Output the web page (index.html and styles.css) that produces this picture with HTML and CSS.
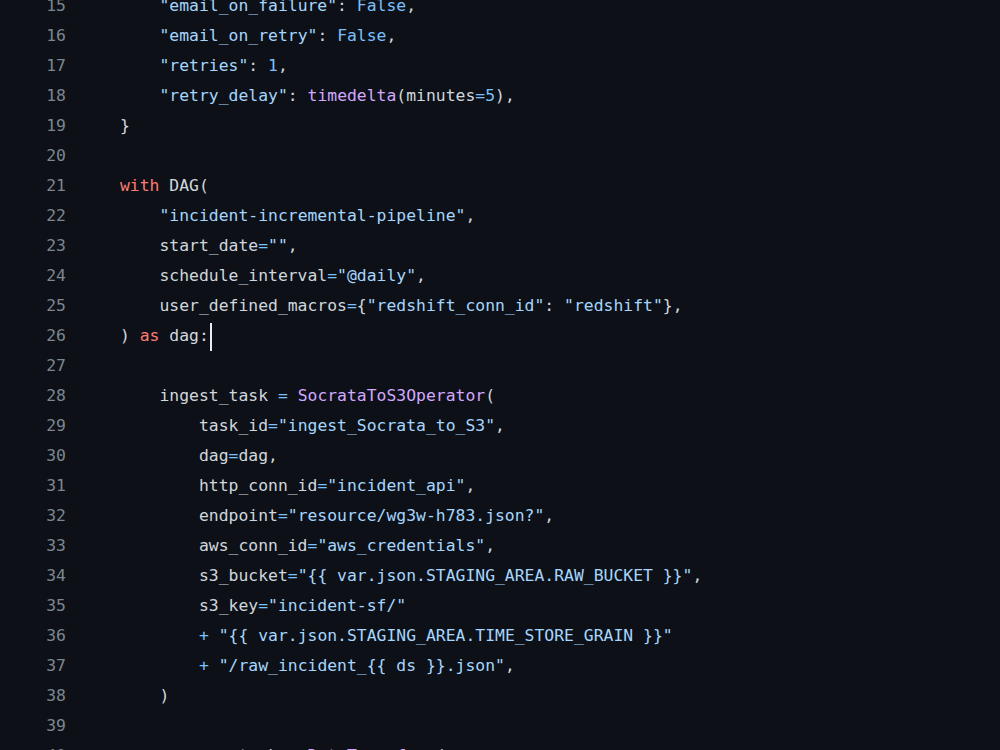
FILE: index.html
```html
<!DOCTYPE html>
<html>
<head>
<meta charset="utf-8">
<link rel="stylesheet" href="styles.css">
</head>
<body>
<div class="code-view">
<div class="line"><span class="ln">15</span><span class="code">    <span class="s">"email_on_failure"</span>: <span class="c">False</span>,</span></div>
<div class="line"><span class="ln">16</span><span class="code">    <span class="s">"email_on_retry"</span>: <span class="c">False</span>,</span></div>
<div class="line"><span class="ln">17</span><span class="code">    <span class="s">"retries"</span>: <span class="c">1</span>,</span></div>
<div class="line"><span class="ln">18</span><span class="code">    <span class="s">"retry_delay"</span>: <span class="f">timedelta</span>(minutes<span class="o">=</span><span class="c">5</span>),</span></div>
<div class="line"><span class="ln">19</span><span class="code">}</span></div>
<div class="line"><span class="ln">20</span><span class="code"></span></div>
<div class="line"><span class="ln">21</span><span class="code"><span class="k">with</span> DAG(</span></div>
<div class="line"><span class="ln">22</span><span class="code">    <span class="s">"incident-incremental-pipeline"</span>,</span></div>
<div class="line"><span class="ln">23</span><span class="code">    start_date<span class="o">=</span><span class="s">""</span>,</span></div>
<div class="line"><span class="ln">24</span><span class="code">    schedule_interval<span class="o">=</span><span class="s">"@daily"</span>,</span></div>
<div class="line"><span class="ln">25</span><span class="code">    user_defined_macros<span class="o">=</span>{<span class="s">"redshift_conn_id"</span>: <span class="s">"redshift"</span>},</span></div>
<div class="line"><span class="ln">26</span><span class="code">) <span class="k">as</span> dag:<span class="cursor"></span></span></div>
<div class="line"><span class="ln">27</span><span class="code"></span></div>
<div class="line"><span class="ln">28</span><span class="code">    ingest_task <span class="o">=</span> <span class="f">SocrataToS3Operator</span>(</span></div>
<div class="line"><span class="ln">29</span><span class="code">        task_id<span class="o">=</span><span class="s">"ingest_Socrata_to_S3"</span>,</span></div>
<div class="line"><span class="ln">30</span><span class="code">        dag<span class="o">=</span>dag,</span></div>
<div class="line"><span class="ln">31</span><span class="code">        http_conn_id<span class="o">=</span><span class="s">"incident_api"</span>,</span></div>
<div class="line"><span class="ln">32</span><span class="code">        endpoint<span class="o">=</span><span class="s">"resource/wg3w-h783.json?"</span>,</span></div>
<div class="line"><span class="ln">33</span><span class="code">        aws_conn_id<span class="o">=</span><span class="s">"aws_credentials"</span>,</span></div>
<div class="line"><span class="ln">34</span><span class="code">        s3_bucket<span class="o">=</span><span class="s">"{{ var.json.STAGING_AREA.RAW_BUCKET }}"</span>,</span></div>
<div class="line"><span class="ln">35</span><span class="code">        s3_key<span class="o">=</span><span class="s">"incident-sf/"</span></span></div>
<div class="line"><span class="ln">36</span><span class="code">        <span class="o">+</span> <span class="s">"{{ var.json.STAGING_AREA.TIME_STORE_GRAIN }}"</span></span></div>
<div class="line"><span class="ln">37</span><span class="code">        <span class="o">+</span> <span class="s">"/raw_incident_{{ ds }}.json"</span>,</span></div>
<div class="line"><span class="ln">38</span><span class="code">    )</span></div>
<div class="line"><span class="ln">39</span><span class="code"></span></div>
<div class="line"><span class="ln">40</span><span class="code">    process_task <span class="o">=</span> <span class="f">DataTransform</span>(</span></div>
</div>
</body>
</html>
```
FILE: styles.css
```css
html, body {
  margin: 0;
  padding: 0;
  background: #0d1117;
  overflow: hidden;
}

.code-view {
  margin-top: -9px;
  font-family: "DejaVu Sans Mono", "Liberation Mono", monospace;
  font-size: 16.4px;
  color: #d0d7de;
}

.line {
  display: flex;
  height: 30px;
  line-height: 30px;
}

.ln {
  width: 66px;
  flex: none;
  text-align: right;
  color: #7d8590;
}

.code {
  display: block;
  padding-left: 54px;
  white-space: pre;
}

.s { color: #a5d6ff; }
.c { color: #79c0ff; }
.k { color: #ff7b72; }
.f { color: #d2a8ff; }
.o { color: #79c0ff; }

.cursor {
  display: inline-block;
  width: 2px;
  height: 28px;
  margin-left: 1px;
  vertical-align: middle;
  background: #e6edf3;
}
```
